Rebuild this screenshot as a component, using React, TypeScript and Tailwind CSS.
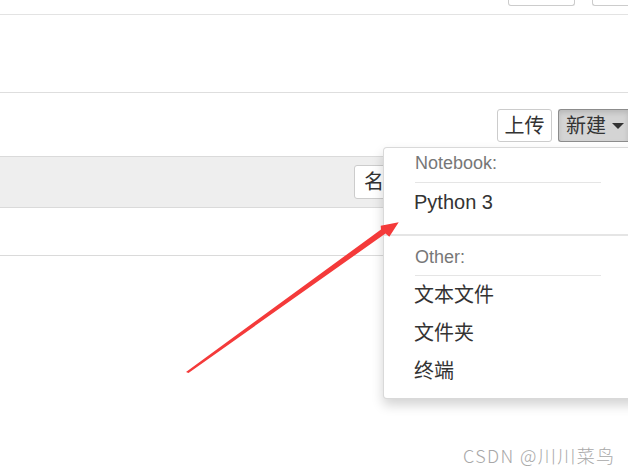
const sans = "font-['Liberation_Sans','Noto_Sans_CJK_SC',sans-serif]";

function MenuHeader({ label, className }: { label: string; className: string }) {
  return (
    <div className={`ml-[31px] w-[186px] border-b border-[#e5e5e5] flex items-center text-[18px] text-[#777] ${className}`}>
      {label}
    </div>
  );
}

function MenuItem({ label, className }: { label: string; className: string }) {
  return <div className={`pl-[30px] flex items-center text-[20px] text-[#333] ${className}`}>{label}</div>;
}

export default function App() {
  return (
    <div className={`relative w-[628px] h-[472px] overflow-hidden bg-white ${sans}`}>
      {/* toolbar cut off at the top */}
      <div className="h-[15px] border-b border-[#e3e3e3] flex items-start justify-end gap-[17px]">
        <div className="w-[67px] h-[6px] border-x border-b border-[#ccc] rounded-b-[3px]" />
        <div className="w-[36px] h-[6px] border-l border-b border-[#ccc] rounded-bl-[3px]" />
      </div>

      <div className="h-[78px] border-b border-[#dedede]" />

      {/* upload / new buttons */}
      <div className="h-[63px] flex items-start justify-end gap-[6px] pt-[16px]">
        <button className="w-[55px] h-[33px] bg-white border border-[#ccc] rounded-[3px] text-[20px] text-[#333] leading-none">
          上传
        </button>
        <button className="w-[70px] h-[33px] bg-[#d4d4d4] border-y border-l border-[#8c8c8c] rounded-l-[3px] text-[20px] text-[#333] leading-none flex items-center pl-[7px] gap-[6px] shadow-[inset_0_3px_5px_rgba(0,0,0,0.125)]">
          新建
          <span className="w-0 h-0 border-x-[6px] border-x-transparent border-t-[6px] border-t-[#333]" />
        </button>
      </div>

      {/* file list header band */}
      <div className="h-[52px] bg-[#eeeeee] border-y border-[#dadada] flex items-start pt-[8px] pl-[354px]">
        <div className="w-[40px] h-[34px] bg-white border border-[#ccc] rounded-[3px] pl-[9px] text-[20px] text-[#333] flex items-center">
          名
        </div>
      </div>
      <div className="h-[48px] border-b border-[#dadada]" />

      {/* new menu */}
      <div className="absolute left-[383px] top-[147px] w-[260px] bg-white border border-[rgba(0,0,0,0.15)] rounded-[4px] shadow-[0_6px_12px_rgba(0,0,0,0.175)] pb-[8px]">
        <MenuHeader label="Notebook:" className="h-[35px] pb-[4px]" />
        <MenuItem label="Python 3" className="h-[38px]" />
        <div className="mt-[13px] h-[2px] bg-[#e5e5e5]" />
        <MenuHeader label="Other:" className="h-[40px] pt-[3px]" />
        <MenuItem label="文本文件" className="h-[38px]" />
        <MenuItem label="文件夹" className="h-[37px]" />
        <MenuItem label="终端" className="h-[39px]" />
      </div>

      {/* red pointer arrow */}
      <svg className="absolute left-0 top-0" width="628" height="472" viewBox="0 0 628 472">
        <polygon
          points="186,372 381,229.5 380.7,225.7 398.7,222.3 389.3,236.7 385.5,233.5 188.5,373"
          fill="#f43a3a"
        />
      </svg>

      <div className="absolute left-[463px] top-[442px] text-[18px] text-[#a8a8a8] font-['Noto_Sans_CJK_SC',sans-serif] font-light tracking-[1.4px]">
        CSDN @川川菜鸟
      </div>
    </div>
  );
}
